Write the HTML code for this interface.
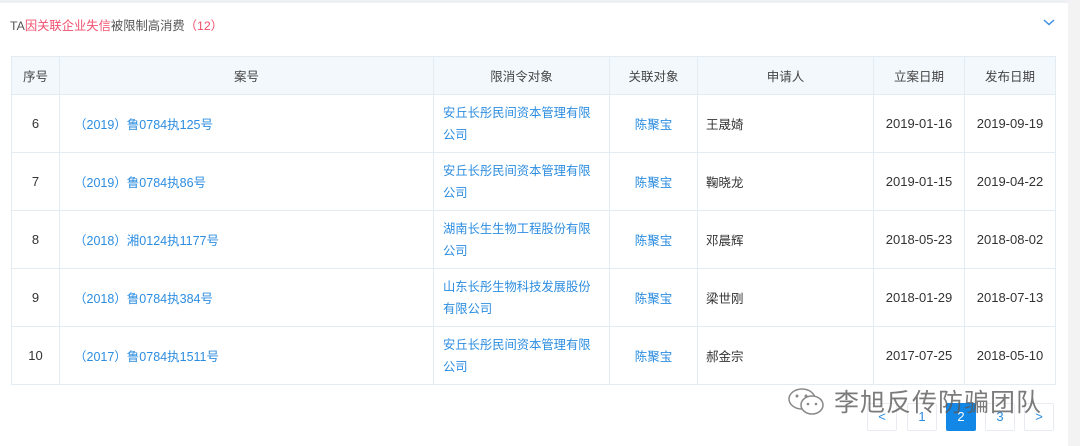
<!DOCTYPE html>
<html><head><meta charset="utf-8"><style>
*{margin:0;padding:0;box-sizing:border-box}
body{width:1080px;height:446px;background:#fff;position:relative;overflow:hidden;font-family:"Liberation Sans","Noto Sans CJK SC",sans-serif;font-size:13px;color:#333}
.top{position:absolute;left:0;top:0;width:1068px;height:3px;background:#eef0f3}
.sb{position:absolute;left:1068px;top:0;width:12px;height:446px;background:#f3f3f3}
.title{position:absolute;left:10px;top:16px;font-size:12.3px;color:#555}
.red{color:#f0506e}
.chev{position:absolute;left:1043px;top:17px}
table{position:absolute;left:11px;top:56px;border-collapse:collapse;width:1044px;table-layout:fixed}
td,th{border:1px solid #e4ecf3;text-align:center;font-weight:normal;color:#333}
th{background:#f2f8fc;height:38px;color:#444;font-size:12.5px}
td{height:58px}
.l{text-align:left;padding-left:14px;color:#2c8de0;font-size:12.5px}
.b{color:#2c8de0;font-size:12.5px}
.n{text-align:left;padding-left:8px;font-size:12.5px}
.c2{line-height:22px;padding-left:9px;padding-right:8px;font-size:12.3px}
.pg{position:absolute;top:403px;width:30px;height:28px;border:1px solid #e8ecf0;border-radius:2px;text-align:center;line-height:26px;color:#2c8de0;font-size:13px}
.act{background:#1287e6;color:#fff;border-color:#1287e6}
.wm{position:absolute;left:787px;top:383px;font-size:25px;color:rgba(90,90,90,.8);letter-spacing:1px}
</style></head><body>
<div class="top"></div><div class="sb"></div>
<div class="title">TA<span class="red">因关联企业失信</span>被限制高消费<span class="red">（12）</span></div>
<svg class="chev" width="12" height="10" viewBox="0 0 12 10"><path d="M1 3 L6 7.5 L11 3" fill="none" stroke="#3a8ee6" stroke-width="1.4"/></svg>
<table>
<colgroup><col style="width:48px"><col style="width:374px"><col style="width:176px"><col style="width:88px"><col style="width:176px"><col style="width:91px"><col style="width:91px"></colgroup>
<tr><th>序号</th><th>案号</th><th>限消令对象</th><th>关联对象</th><th>申请人</th><th>立案日期</th><th>发布日期</th></tr>
<tr><td>6</td><td class="l">（2019）鲁0784执125号</td><td class="l c2">安丘长彤民间资本管理有限<br>公司</td><td class="b">陈聚宝</td><td class="n">王晟婍</td><td>2019-01-16</td><td>2019-09-19</td></tr>
<tr><td>7</td><td class="l">（2019）鲁0784执86号</td><td class="l c2">安丘长彤民间资本管理有限<br>公司</td><td class="b">陈聚宝</td><td class="n">鞠晓龙</td><td>2019-01-15</td><td>2019-04-22</td></tr>
<tr><td>8</td><td class="l">（2018）湘0124执1177号</td><td class="l c2">湖南长生生物工程股份有限<br>公司</td><td class="b">陈聚宝</td><td class="n">邓晨辉</td><td>2018-05-23</td><td>2018-08-02</td></tr>
<tr><td>9</td><td class="l">（2018）鲁0784执384号</td><td class="l c2">山东长彤生物科技发展股份<br>有限公司</td><td class="b">陈聚宝</td><td class="n">梁世刚</td><td>2018-01-29</td><td>2018-07-13</td></tr>
<tr><td>10</td><td class="l">（2017）鲁0784执1511号</td><td class="l c2">安丘长彤民间资本管理有限<br>公司</td><td class="b">陈聚宝</td><td class="n">郝金宗</td><td>2017-07-25</td><td>2018-05-10</td></tr>
</table>
<div class="pg" style="left:867px">&lt;</div>
<div class="pg" style="left:907px">1</div>
<div class="pg act" style="left:946px">2</div>
<div class="pg" style="left:985px">3</div>
<div class="pg" style="left:1024px">&gt;</div>
<svg style="position:absolute;left:786px;top:386px" width="44" height="32" viewBox="0 0 44 32"><ellipse cx="16" cy="13" rx="13" ry="10" fill="none" stroke="#888" stroke-width="1.5"/><ellipse cx="26" cy="19" rx="11" ry="9" fill="#fff" stroke="#888" stroke-width="1.5"/><circle cx="11" cy="10" r="1.5" fill="#888"/><circle cx="20" cy="10" r="1.5" fill="#888"/><circle cx="22" cy="18" r="1.3" fill="#888"/><circle cx="30" cy="18" r="1.3" fill="#888"/></svg>
<div class="wm" style="left:834px">李旭反传防骗团队</div>
</body></html>
